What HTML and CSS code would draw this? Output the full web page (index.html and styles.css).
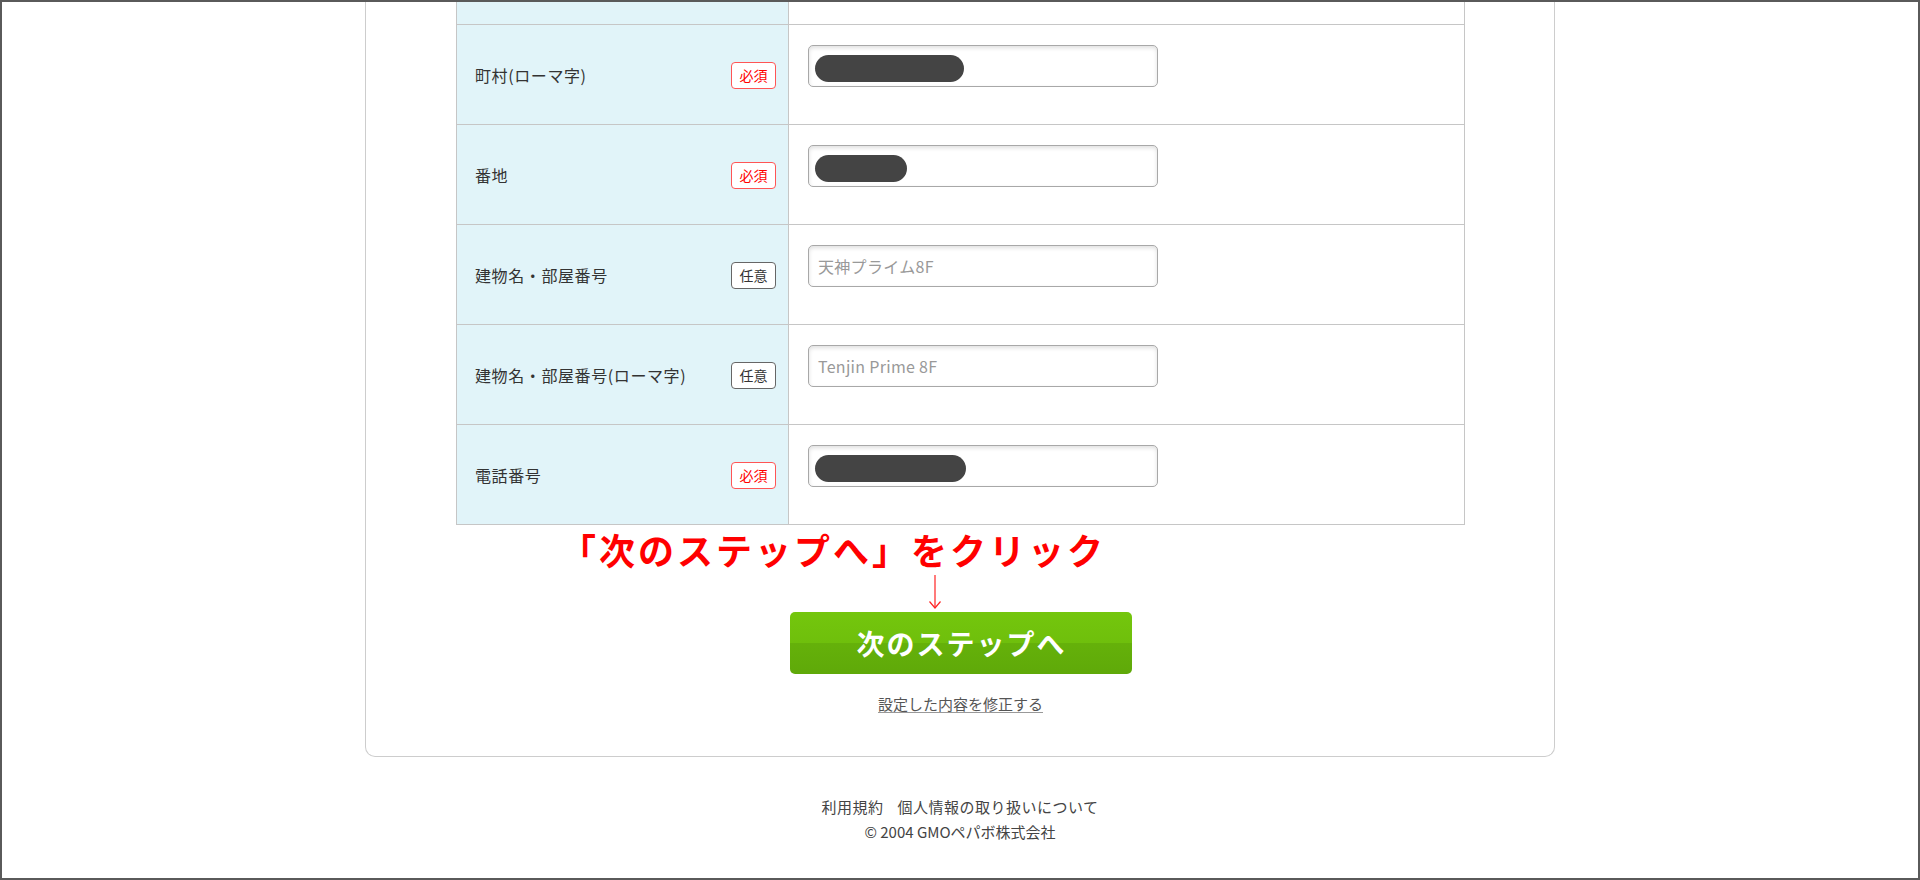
FILE: index.html
```html
<!DOCTYPE html>
<html lang="ja">
<head>
<meta charset="utf-8">
<title>お客様情報の確認</title>
<link rel="stylesheet" href="styles.css">
</head>
<body>
<div class="card">
  <div class="form-table">
    <div class="row row-partial">
      <div class="label-cell"></div>
      <div class="value-cell"></div>
    </div>
    <div class="row">
      <div class="label-cell"><span class="label">町村(ローマ字)</span><span class="badge badge-req">必須</span></div>
      <div class="value-cell"><div class="field"><span class="blob blob-long"></span></div></div>
    </div>
    <div class="row">
      <div class="label-cell"><span class="label">番地</span><span class="badge badge-req">必須</span></div>
      <div class="value-cell"><div class="field"><span class="blob blob-short"></span></div></div>
    </div>
    <div class="row">
      <div class="label-cell"><span class="label">建物名・部屋番号</span><span class="badge badge-opt">任意</span></div>
      <div class="value-cell"><div class="field field-text"><span class="placeholder">天神プライム8F</span></div></div>
    </div>
    <div class="row">
      <div class="label-cell"><span class="label">建物名・部屋番号(ローマ字)</span><span class="badge badge-opt">任意</span></div>
      <div class="value-cell"><div class="field field-text"><span class="placeholder">Tenjin Prime 8F</span></div></div>
    </div>
    <div class="row">
      <div class="label-cell"><span class="label">電話番号</span><span class="badge badge-req">必須</span></div>
      <div class="value-cell"><div class="field"><span class="blob blob-phone"></span></div></div>
    </div>
  </div>

  <p class="annotation">「次のステップへ」をクリック</p>
  <div class="arrow-wrap">
    <svg class="arrow" width="16" height="34" viewBox="0 0 16 34" aria-hidden="true">
      <line x1="8" y1="0" x2="8" y2="33" stroke="#f22" stroke-width="1.2"/>
      <polyline points="2.5,26.5 8,33 13.5,26.5" fill="none" stroke="#f22" stroke-width="1.2"/>
    </svg>
  </div>
  <div class="actions">
    <a class="btn-next" href="#">次のステップへ</a>
    <a class="edit-link" href="#">設定した内容を修正する</a>
  </div>
</div>

<footer class="footer">
  <div class="footer-links"><a href="#">利用規約</a><a href="#">個人情報の取り扱いについて</a></div>
  <div class="copyright">© 2004 GMOペパボ株式会社</div>
</footer>
</body>
</html>
```
FILE: styles.css
```css
* {
  box-sizing: border-box;
}

html, body {
  margin: 0;
  padding: 0;
}

body {
  height: 880px;
  overflow: hidden;
  border: 2px solid #5a5a5a;
  background: #fff;
  font-family: "Noto Sans CJK JP", "Noto Sans", sans-serif;
  color: #333;
}

.card {
  width: 1190px;
  margin: 0 auto;
  border: 1px solid #cdcdcd;
  border-top: none;
  border-radius: 0 0 10px 10px;
  padding: 0 89px 42px 90px;
}

.form-table {
  border-left: 1px solid #c6c6c6;
  border-right: 1px solid #c6c6c6;
}

.row {
  display: grid;
  grid-template-columns: 332px 1fr;
  height: 100px;
  border-bottom: 1px solid #c6c6c6;
}

.row-partial {
  height: 23px;
}

.label-cell {
  background: #e1f4f9;
  border-right: 1px solid #c6c6c6;
  display: flex;
  align-items: center;
  justify-content: space-between;
  padding: 1px 12px 0 18px;
}

.label {
  font-size: 16px;
  letter-spacing: 0.6px;
  color: #333;
  line-height: 20px;
}

.badge {
  width: 45px;
  height: 27px;
  border-radius: 4px;
  display: flex;
  align-items: center;
  justify-content: center;
  font-size: 14px;
  line-height: 1;
  background: #fff;
}

.badge-req {
  border: 1px solid #f55;
  color: #f00;
}

.badge-opt {
  border: 1px solid #666;
  color: #333;
}

.value-cell {
  padding: 20px 0 0 19px;
}

.field {
  width: 350px;
  height: 42px;
  border: 1px solid #a8a8a8;
  border-radius: 5px;
  box-shadow: inset 0 2px 4px rgba(0, 0, 0, 0.13);
  background: #fff;
  padding: 9px 0 0 6px;
}

.field-text {
  display: flex;
  align-items: center;
  padding: 0 0 0 9px;
}

.blob {
  display: block;
  height: 27px;
  border-radius: 14px;
  background: #444;
}

.blob-long { width: 149px; }
.blob-short { width: 92px; }
.blob-phone { width: 151px; }

.placeholder {
  font-size: 16px;
  letter-spacing: 0.3px;
  color: #999;
}

.annotation {
  margin: 3px 0 0 104px;
  font-size: 36px;
  line-height: 42px;
  font-weight: 700;
  letter-spacing: 3px;
  color: #f00;
}

.arrow-wrap {
  display: flex;
  padding-left: 471px;
  margin-top: 5px;
  height: 34px;
}

.arrow {
  display: block;
}

.actions {
  display: flex;
  flex-direction: column;
  align-items: center;
  margin-top: 3px;
}

.btn-next {
  display: flex;
  align-items: center;
  justify-content: center;
  width: 342px;
  height: 62px;
  border-radius: 5px;
  background: linear-gradient(#74c60d 0%, #6fbf0c 50%, #65b10a 50%, #5fa909 100%);
  color: #fff;
  font-size: 28px;
  font-weight: 700;
  letter-spacing: 2px;
  padding-left: 2px;
  text-decoration: none;
}

.edit-link {
  margin-top: 20px;
  font-size: 15px;
  line-height: 20px;
  color: #555;
  text-decoration: underline;
  text-decoration-color: #999;
  text-underline-offset: 2px;
}

.footer {
  margin-top: 37px;
  text-align: center;
  font-size: 15px;
  line-height: 25px;
  color: #444;
}

.footer-links {
  display: flex;
  justify-content: center;
  gap: 14px;
}

.footer-links a {
  color: #444;
  text-decoration: none;
  letter-spacing: 0.5px;
}

.copyright {
  color: #444;
}
```
